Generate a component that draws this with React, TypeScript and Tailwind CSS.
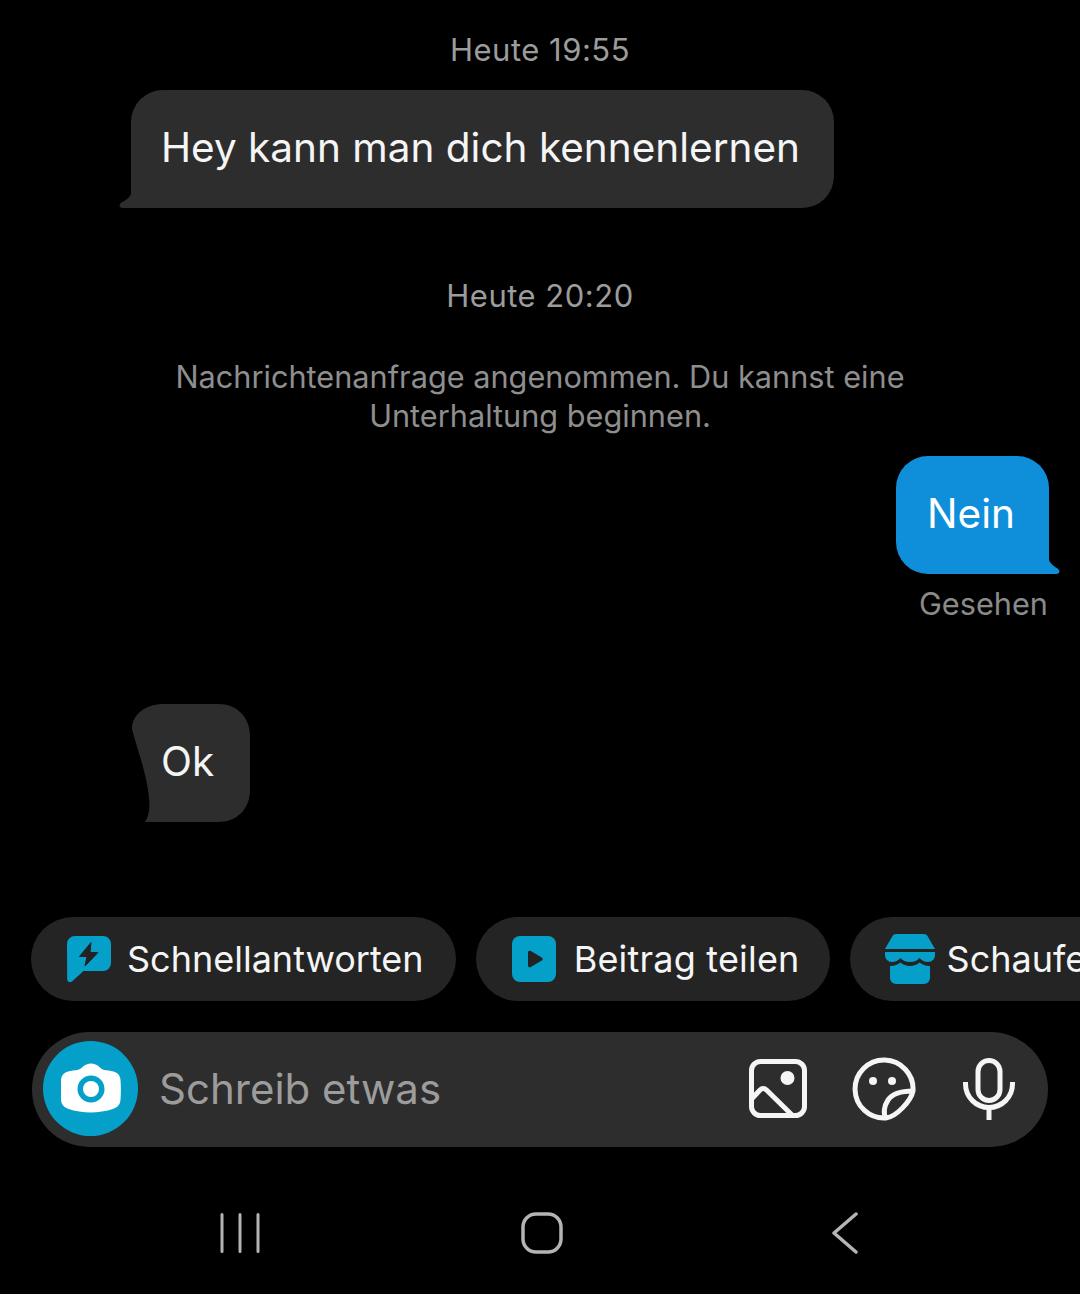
const QuickReplyIcon = () => (
  <svg className="-ml-px" width="46" height="48" viewBox="0 0 46 48">
    <path d="M9 1h28a8 8 0 0 1 8 8v19a8 8 0 0 1-8 8H17.500L6 46.500C4 48 1.500 47 1.200 44.500L1 9a8 8 0 0 1 8-8z" fill="#04a0ca" />
    <path d="M25 7.500 13.500 21.500h7.500L19 31 32 17.500h-8z" fill="#222" stroke="#222" strokeWidth="1" strokeLinejoin="round" />
  </svg>
);

const PlayIcon = () => (
  <svg width="44" height="46" viewBox="0 0 44 46">
    <rect width="44" height="46" rx="8" fill="#04a0ca" />
    <path d="M16 16.500c0-1.500 1.500-2.300 2.800-1.500l11 6.500c1.200.7 1.200 2.400 0 3.100l-11 6.500c-1.300.8-2.800-.1-2.800-1.500z" fill="#222" />
  </svg>
);

const StoreIcon = () => (
  <svg className="-ml-px" width="50" height="50" viewBox="0 0 50 50">
    <path d="M11 0h28c1.500 0 2.800.8 3.500 2.100L50 15H0L7.500 2.100C8.200.8 9.500 0 11 0z" fill="#04a0ca" />
    <path d="M0 18h50v3c0 4-3 7-7 7-3.500 0-6-1.500-8.500-4-2.300 2.500-5 4-9.500 4s-7.200-1.500-9.500-4c-2.500 2.500-5 4-8.500 4-4 0-7-3-7-7z" fill="#04a0ca" />
    <path d="M5 32c3.500.5 7-1 10.500-3.500 2.500 2 5.500 3.500 9.500 3.500s7-1.500 9.500-3.500c3.500 2.500 7 4 10.500 3.500v12a6 6 0 0 1-6 6H11a6 6 0 0 1-6-6z" fill="#04a0ca" />
  </svg>
);

const CameraIcon = () => (
  <svg className="-translate-y-px" width="60" height="50" viewBox="0 0 60 50">
    <path d="M21 4.500C24 1.500 27 .5 30 .5s6 1 9 4c1.500 1.500 3 2.500 6 2.800 3.500.3 7 .7 9.500 2 3 1.500 4.800 4 5 7.500.5 6 .5 14 0 20-.3 4-2.500 7.500-7 9-7 2.500-16 3.700-23 3.700S14 48.300 7 45.800c-4.500-1.500-6.700-5-7-9-.5-6-.5-14 0-20 .2-3.500 2-6 5-7.500 2.500-1.300 6-1.700 9.500-2 3-.3 5-1.300 6.500-2.800z" fill="#fff" />
    <circle cx="30" cy="26" r="13.500" fill="#04a0ca" />
    <circle cx="30" cy="26" r="8" fill="#fff" />
  </svg>
);

const ImageIcon = () => (
  <svg width="58" height="59" viewBox="0 0 58 59" fill="none" stroke="#f5f5f5" strokeWidth="5" strokeLinecap="round" strokeLinejoin="round">
    <rect x="2.500" y="2.500" width="53" height="54" rx="9" />
    <circle cx="38.500" cy="19" r="7" fill="#f5f5f5" stroke="none" />
    <path d="M4 38.500 11 31c2-2 4.500-2 6.500 0L43 56" />
  </svg>
);

const StickerIcon = () => (
  <svg className="ml-[45px]" width="64" height="64" viewBox="0 0 64 64" fill="none" stroke="#f5f5f5" strokeWidth="5" strokeLinejoin="round">
    <path d="M34 61A29 29 0 1 1 61 34C59 44 44 60 34 61z" />
    <path d="M34 61c-3-4-2-12 2-18s12-9 25-9" />
    <circle cx="21" cy="24" r="4" fill="#f5f5f5" stroke="none" />
    <circle cx="40" cy="24" r="4" fill="#f5f5f5" stroke="none" />
  </svg>
);

const MicIcon = () => (
  <svg className="ml-[47px]" width="52" height="62" viewBox="0 0 52 62" fill="none" stroke="#f5f5f5" strokeWidth="5">
    <rect x="15" y="2.500" width="22" height="40" rx="11" />
    <path d="M2.500 24v2a23.500 23.500 0 0 0 47 0v-2" />
    <path d="M26 50v12" />
  </svg>
);

const Chip = ({ icon, label, className, labelClass = "" }: { icon: React.ReactNode; label: string; className: string; labelClass?: string }) => (
  <div className={`flex h-[84px] shrink-0 items-center rounded-full bg-[#242424] pl-9 ${className}`}>
    {icon}
    <span className={`text-[36px] leading-none text-[#f5f5f5] ${labelClass}`}>{label}</span>
  </div>
);

export default function App() {
  return (
    <div className="h-[1294px] w-[1080px] overflow-hidden bg-black font-['Inter','Liberation_Sans',sans-serif]">
      <div className="flex flex-col pt-[30px]">
        <p className="text-center text-[31px] leading-[40px] tracking-[0.5px] text-[#9c9c9c]">Heute 19:55</p>

        {/* incoming message */}
        <div className="relative ml-[131px] mt-5 flex h-[118px] w-[703px] items-center rounded-[32px] rounded-bl-none bg-[#2d2d2d] pb-[2px] pl-[30px]">
          <svg className="absolute -left-[12px] bottom-0" width="21" height="24" viewBox="0 0 21 24">
            <path d="M12 0v9c0 3-3 6-9.500 9.500-3 2-2.500 5.500 1.500 5.500H21V0z" fill="#2d2d2d" />
          </svg>
          <span className="relative text-[40.5px] leading-none text-[#f5f5f5]">Hey kann man dich kennenlernen</span>
        </div>

        <p className="mt-[68px] text-center text-[31px] leading-[40px] tracking-[0.5px] text-[#9c9c9c]">Heute 20:20</p>
        <p className="mt-[41px] text-center text-[30.7px] leading-[39px] text-[#8e8e8e]">
          Nachrichtenanfrage angenommen. Du kannst eine
          <br />
          Unterhaltung beginnen.
        </p>

        {/* outgoing message */}
        <div className="relative ml-[896px] mt-[21px] flex h-[118px] w-[153px] items-center rounded-[32px] rounded-br-none bg-[#0f8fd9] pb-[2px] pl-[31px]">
          <svg className="absolute -right-[11px] bottom-0" width="20" height="24" viewBox="0 0 20 24">
            <path d="M9 0v9c0 3 3 6 8.500 9.500 3 2 2.500 5.500-1.500 5.500H0V0z" fill="#0f8fd9" />
          </svg>
          <span className="relative text-[40.5px] leading-none text-white">Nein</span>
        </div>
        <p className="mt-2.5 pr-8 text-right text-[30.7px] leading-[40px] text-[#8a8a8a]">Gesehen</p>

        {/* reply */}
        <div className="relative ml-[132px] mt-20 flex h-[118px] w-[118px] items-center pb-[2px] pl-[29px]">
          <svg className="absolute inset-0" width="118" height="118" viewBox="0 0 118 118">
            <path d="M0 25C0 10 14 0 32 0h54c19 0 32 13 32 32v54c0 19-13 32-32 32H13c4-6 5-13 4-24C15 70 5 45 0 25z" fill="#2d2d2d" />
          </svg>
          <span className="relative text-[40.5px] leading-none text-[#f5f5f5]">Ok</span>
        </div>

        {/* shortcuts */}
        <div className="mt-[95px] flex gap-5 overflow-hidden pl-[31px]">
          <Chip icon={<QuickReplyIcon />} label="Schnellantworten" className="gap-[15px] pr-8" />
          <Chip icon={<PlayIcon />} label="Beitrag teilen" className="gap-[18px] pr-[30px]" labelClass="tracking-[0.2px]" />
          <Chip icon={<StoreIcon />} label="Schaufenster" className="gap-3 pr-8" />
        </div>

        {/* composer */}
        <div className="ml-8 mt-[31px] flex h-[115px] w-[1016px] items-center rounded-full bg-[#2d2d2d] pl-[11px]">
          <div className="flex h-[95px] w-[95px] -translate-y-px items-center justify-center rounded-full bg-[#04a0ca]">
            <CameraIcon />
          </div>
          <span className="ml-[21px] -translate-y-px text-[42px] leading-none text-[#9c9c9c]">Schreib etwas</span>
          <div className="ml-auto mr-[33px] flex items-center pb-[2px]">
            <ImageIcon />
            <StickerIcon />
            <MicIcon />
          </div>
        </div>

        {/* system nav */}
        <div className="ml-[220px] mt-[66px] flex h-10 items-center">
          <svg width="40" height="40" viewBox="0 0 40 40" stroke="#b4b4b4" strokeWidth="3" strokeLinecap="round">
            <path d="M2 1.500v37M20 1.500v37M38 1.500v37" />
          </svg>
          <svg className="ml-[261px]" width="42" height="42" viewBox="0 0 42 42" fill="none" stroke="#b4b4b4" strokeWidth="3.500">
            <rect x="2" y="2" width="38" height="38" rx="13" />
          </svg>
          <svg className="ml-[268px]" width="28" height="42" viewBox="0 0 28 42" fill="none" stroke="#b4b4b4" strokeWidth="3.500" strokeLinecap="round" strokeLinejoin="round">
            <path d="M25 2 3 21l22 19" />
          </svg>
        </div>
      </div>
    </div>
  );
}
